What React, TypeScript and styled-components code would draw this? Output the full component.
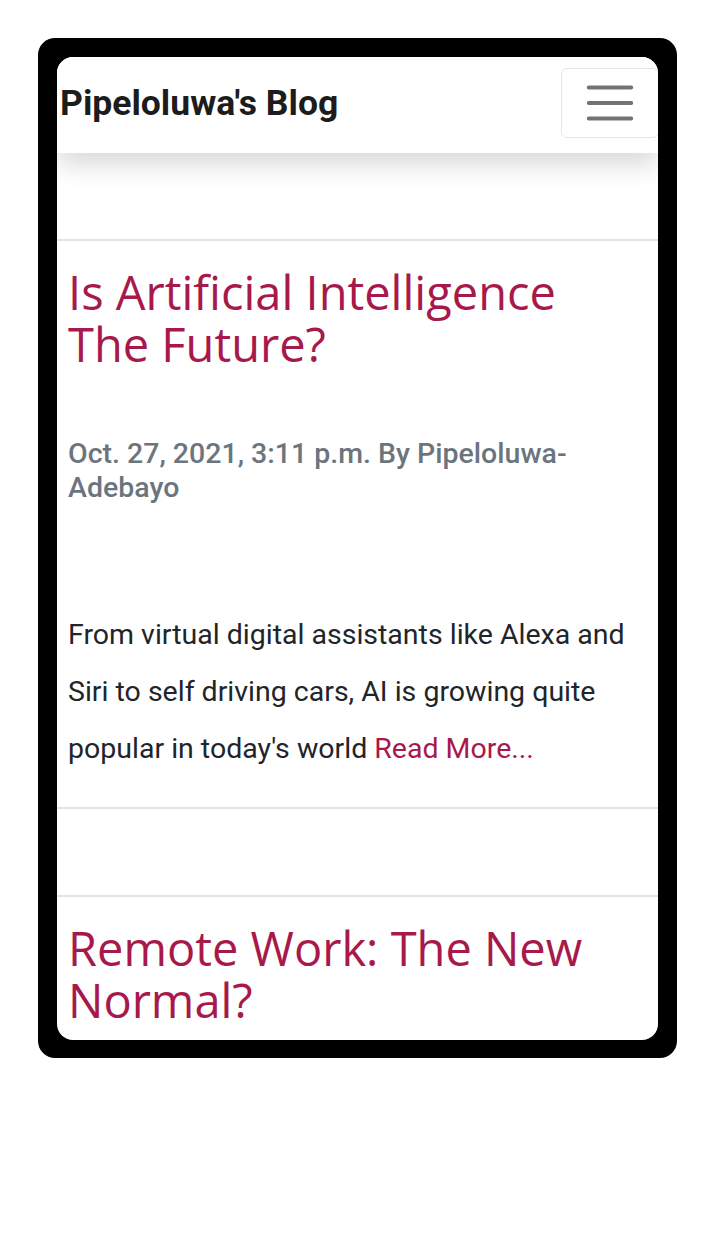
import React from 'react'
import styled, { createGlobalStyle } from 'styled-components'

const GlobalStyle = createGlobalStyle`
  html, body {
    margin: 0;
    padding: 0;
    background: #ffffff;
  }
  * {
    box-sizing: border-box;
  }
`

const Page = styled.div`
  width: 715px;
  height: 1257px;
  padding: 38px 0 0 38px;
  background: #ffffff;
`

const Phone = styled.div`
  width: 639px;
  height: 1020px;
  padding: 19px 19px 18px 19px;
  background: #000000;
  border-radius: 17px;
`

const Screen = styled.div`
  width: 601px;
  height: 983px;
  background: #ffffff;
  border-radius: 16px;
  overflow: hidden;
`

const Navbar = styled.nav`
  position: relative;
  z-index: 1;
  height: 96px;
  display: flex;
  align-items: flex-start;
  justify-content: space-between;
  padding: 11px 0 0 3px;
  background: #ffffff;
  box-shadow: 0 12px 24px rgba(0, 0, 0, 0.15);
`

const Brand = styled.a`
  margin-top: 14px;
  font-family: Roboto, 'Liberation Sans', sans-serif;
  font-weight: 700;
  font-size: 35.5px;
  line-height: 42px;
  color: #1c1c1c;
  text-decoration: none;
`

const Toggler = styled.button`
  display: flex;
  align-items: center;
  justify-content: center;
  margin-right: -1px;
  padding: 5px 19px;
  background: transparent;
  border: 1px solid rgba(0, 0, 0, 0.1);
  border-radius: 6px;
`

const Main = styled.main`
  padding-top: 86px;
`

const Rule = styled.hr`
  margin: 0;
  border: 0;
  border-top: 2px solid #e2e2e2;
`

const Gap = styled.div<{ $h: number }>`
  height: ${({ $h }) => $h}px;
`

const Post = styled.article`
  padding: 0 11px;
`

const Title = styled.h2`
  margin: 25px 0 0;
  padding-right: 20px;
  font-family: 'Open Sans', 'Noto Sans', sans-serif;
  font-weight: 500;
  font-size: 47px;
  letter-spacing: 0;
  line-height: 52px;
  color: #a8194b;
`

const Meta = styled.p`
  margin: 67px 0 0;
  font-family: Roboto, 'Liberation Sans', sans-serif;
  font-weight: 500;
  font-size: 28.5px;
  line-height: 34px;
  color: #6c757d;
`

const Body = styled.p`
  margin: 101px 0 30px;
  font-family: Roboto, 'Liberation Sans', sans-serif;
  font-weight: 400;
  font-size: 28.5px;
  line-height: 57px;
  color: #212529;
`

const ReadMore = styled.span`
  color: #a8194b;
  cursor: pointer;
`

const MenuIcon = () => (
  <svg width="58" height="58" viewBox="0 0 30 30" aria-hidden="true">
    <path
      d="M4 7h22M4 15h22M4 23h22"
      stroke="rgba(0,0,0,0.55)"
      strokeWidth="2"
      strokeLinecap="round"
      strokeMiterlimit="10"
    />
  </svg>
)

export default function App() {
  return (
    <>
      <GlobalStyle />
      <Page>
        <Phone>
          <Screen>
            <Navbar>
              <Brand href="#">Pipeloluwa's Blog</Brand>
              <Toggler aria-label="Toggle navigation">
                <MenuIcon />
              </Toggler>
            </Navbar>
            <Main>
              <Rule />
              <Post>
                <Title>Is Artificial Intelligence The Future?</Title>
                <Meta>Oct. 27, 2021, 3:11 p.m. By Pipeloluwa-Adebayo</Meta>
                <Body>
                  From virtual digital assistants like Alexa and Siri to self driving cars, AI is
                  growing quite popular in today's world <ReadMore>Read More...</ReadMore>
                </Body>
              </Post>
              <Rule />
              <Gap $h={86} />
              <Rule />
              <Post>
                <Title>Remote Work: The New Normal?</Title>
              </Post>
            </Main>
          </Screen>
        </Phone>
      </Page>
    </>
  )
}
